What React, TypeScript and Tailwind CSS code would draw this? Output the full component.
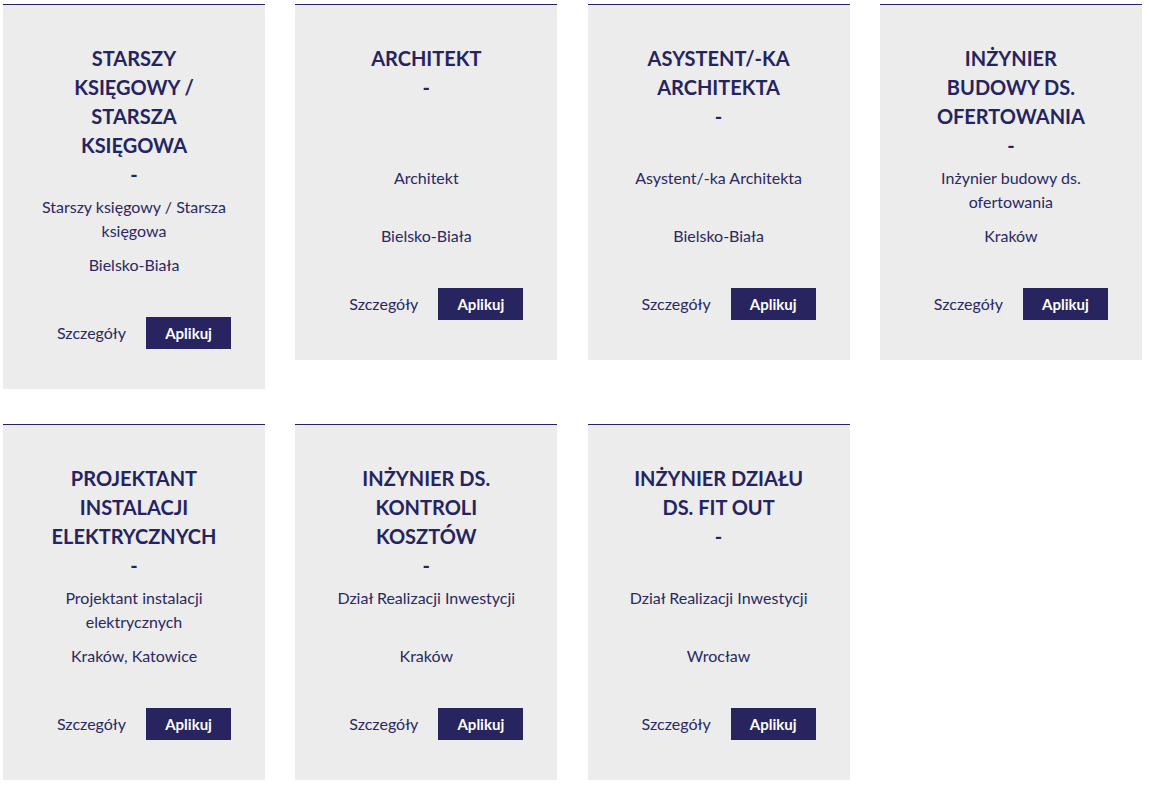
import React from "react";

type Job = { title: string[]; desc: string[]; city: string };

const jobs: Job[] = [
  { title: ["STARSZY", "KSIĘGOWY /", "STARSZA", "KSIĘGOWA"], desc: ["Starszy księgowy / Starsza", "księgowa"], city: "Bielsko-Biała" },
  { title: ["ARCHITEKT"], desc: ["Architekt"], city: "Bielsko-Biała" },
  { title: ["ASYSTENT/-KA", "ARCHITEKTA"], desc: ["Asystent/-ka Architekta"], city: "Bielsko-Biała" },
  { title: ["INŻYNIER", "BUDOWY DS.", "OFERTOWANIA"], desc: ["Inżynier budowy ds.", "ofertowania"], city: "Kraków" },
  { title: ["PROJEKTANT", "INSTALACJI", "ELEKTRYCZNYCH"], desc: ["Projektant instalacji", "elektrycznych"], city: "Kraków, Katowice" },
  { title: ["INŻYNIER DS.", "KONTROLI", "KOSZTÓW"], desc: ["Dział Realizacji Inwestycji"], city: "Kraków" },
  { title: ["INŻYNIER DZIAŁU", "DS. FIT OUT"], desc: ["Dział Realizacji Inwestycji"], city: "Wrocław" },
];

function Card({ job }: { job: Job }) {
  return (
    <div className="border-t border-[#26245e] bg-[#ececec] pt-[39px] pb-[40px] flex flex-col items-center text-center text-[#2a2960]">
      <div className="min-h-[116px] flex flex-col items-center">
        {job.title.map((t) => (
          <span key={t} className="block whitespace-nowrap text-[20px] leading-[29px] font-bold text-[#26245e]">
            {t}
          </span>
        ))}
        <span className="block text-[20px] leading-[29px] font-bold text-[#26245e]">-</span>
      </div>
      <div className="mt-[6px] min-h-[48px] flex flex-col items-center">
        {job.desc.map((d) => (
          <span key={d} className="block whitespace-nowrap text-[16px] leading-[24px]">
            {d}
          </span>
        ))}
      </div>
      <div className="mt-[10px] text-[16px] leading-[24px] whitespace-nowrap">{job.city}</div>
      <div className="mt-[40px] flex items-center justify-center gap-[20px] pl-[20px]">
        <span className="text-[16px] leading-[24px]">Szczegóły</span>
        <button className="w-[85px] h-[32px] bg-[#27245f] text-white font-bold text-[15px] flex items-center justify-center">
          Aplikuj
        </button>
      </div>
    </div>
  );
}

export default function App() {
  return (
    <div
      className="min-h-[785px] bg-white pl-[3px] pt-[4px]"
      style={{ fontFamily: "Lato, 'Noto Sans', sans-serif" }}
    >
      <div className="grid grid-cols-[262px_262px_262px_262px] gap-x-[30.3px] gap-y-[35px] items-start">
        {jobs.map((j, i) => (
          <Card key={i} job={j} />
        ))}
      </div>
    </div>
  );
}
